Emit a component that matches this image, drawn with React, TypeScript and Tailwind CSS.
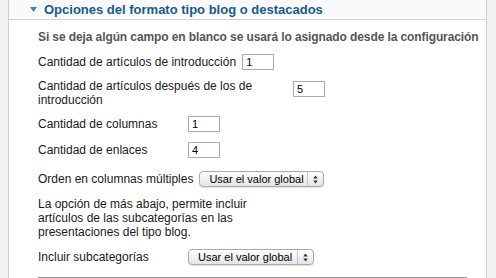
import React from "react";

const font = { fontFamily: '"Liberation Sans", Arial, sans-serif' };

function NumberField({ value, className = "" }: { value: string; className?: string }) {
  return (
    <input
      readOnly
      value={value}
      className={`h-[16px] w-[32px] shrink-0 border border-[#aaaaaa] bg-white px-[3px] text-[11px] text-black outline-none ${className}`}
      style={font}
    />
  );
}

function SelectBox({ width }: { width: string }) {
  return (
    <div
      className={`flex h-[16px] ${width} items-center rounded-[4px] border border-[#a9a9a9] bg-gradient-to-b from-white to-[#e4e4e4] text-[11px] text-black shadow-[0_1px_1px_rgba(0,0,0,0.12)]`}
    >
      <span className="flex-1 pl-[9px] leading-none">Usar el valor global</span>
      <span className="flex h-full w-[16px] items-center justify-center border-l border-[#c6c6c6]">
        <svg width="5" height="9" viewBox="0 0 5 9">
          <path d="M2.5 0.5 L4.8 3.5 L0.2 3.5 Z M2.5 8.5 L4.8 5.5 L0.2 5.5 Z" fill="#333" />
        </svg>
      </span>
    </div>
  );
}

export default function App() {
  return (
    <div className="flex h-[278px] w-[496px] overflow-hidden bg-[#f2f2f2]" style={font}>
      <div className="w-[8px] shrink-0" />
      {/* Panel */}
      <div className="flex w-[479px] shrink-0 flex-col border-x border-[#cfcfcf] bg-white">
        {/* Header */}
        <div className="flex h-[20px] shrink-0 items-center gap-[7px] border-b border-[#d4d4d4] bg-[#fafafa] pl-[21px]">
          <svg width="7" height="5" viewBox="0 0 7 5">
            <path d="M0 0 L7 0 L3.5 5 Z" fill="#2d8ac7" />
          </svg>
          <span className="text-[13px] font-bold text-[#155b8e]">
            Opciones del formato tipo blog o destacados
          </span>
        </div>

        <div className="flex flex-col pl-[29px] pr-[6px] text-[12px] text-[#1a1a1a]">
          <p className="mt-[10px] whitespace-nowrap text-[12px] font-bold leading-[14px] tracking-[-0.1px] text-[#555555]">
            Si se deja algún campo en blanco se usará lo asignado desde la configuración
          </p>

          <div className="mt-[10px] flex items-center gap-[6px]">
            <span className="leading-[14px]">Cantidad de artículos de introducción</span>
            <NumberField value="1" />
          </div>

          <div className="mt-[9px] flex items-start">
            <span className="w-[255px] leading-[14px]">
              Cantidad de artículos después de los de introducción
            </span>
            <NumberField value="5" className="mt-[2px]" />
          </div>

          <div className="mt-[9px] flex items-center">
            <span className="w-[150px] leading-[14px]">Cantidad de columnas</span>
            <NumberField value="1" />
          </div>

          <div className="mt-[10px] flex items-center">
            <span className="w-[150px] leading-[14px]">Cantidad de enlaces</span>
            <NumberField value="4" />
          </div>

          <div className="mt-[13px] flex items-center gap-[6px]">
            <span className="leading-[14px]">Orden en columnas múltiples</span>
            <SelectBox width="w-[125px]" />
          </div>

          <p className="mt-[10px] w-[240px] leading-[14px]">
            La opción de más abajo, permite incluir artículos de las subcategorías en las presentaciones del tipo blog.
          </p>

          <div className="mt-[10px] flex items-center">
            <span className="w-[150px] leading-[14px]">Incluir subcategorías</span>
            <SelectBox width="w-[126px]" />
          </div>

          <div className="mt-[12px] mr-[13px] border-t border-[#999999]" />
        </div>
      </div>
    </div>
  );
}
